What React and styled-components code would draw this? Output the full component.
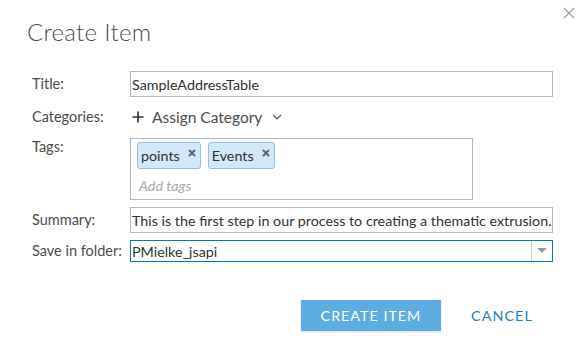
import React from "react";
import styled, { createGlobalStyle } from "styled-components";

const Global = createGlobalStyle`
  html, body { margin: 0; padding: 0; background: #fff; }
  body { font-family: "Lato", "Noto Sans", sans-serif; color: #323232; }
`;

const Dialog = styled.div`
  position: relative;
  width: 585px;
  height: 361px;
  box-sizing: border-box;
  padding: 17px 0 0 27px;
`;

const Close = styled.button`
  position: absolute;
  top: 6px;
  right: 9px;
  width: 14px;
  height: 14px;
  padding: 0;
  border: 0;
  background: none;
  cursor: pointer;
`;

const Heading = styled.h1`
  margin: 0;
  font-size: 24px;
  font-weight: 300;
  line-height: 30px;
  color: #4c4c4c;
  letter-spacing: 0.3px;
`;

const Form = styled.div`
  display: grid;
  grid-template-columns: 98px 423px;
  row-gap: 7px;
  margin: 24px 0 0 5px;
  align-items: start;
`;

const Label = styled.div`
  font-size: 14.5px;
  color: #4c4c4c;
  line-height: ${(p) => p.$lh || "26px"};
  padding-top: ${(p) => p.$pt || "0"};
  white-space: nowrap;
`;

const Input = styled.div`
  box-sizing: border-box;
  height: ${(p) => p.$h || "26px"};
  border: 1px solid ${(p) => (p.$focus ? "#0079c1" : "#b7b7b7")};
  display: flex;
  align-items: center;
  padding-left: 1px;
  font-size: 14.3px;
  color: #323232;
  white-space: nowrap;
  overflow: hidden;
`;

const Category = styled.div`
  display: flex;
  align-items: center;
  height: 25px;
  font-size: 15.5px;
  color: #4c4c4c;
  gap: 8px;
  padding-left: 2px;
`;

const TagBox = styled.div`
  box-sizing: border-box;
  width: 343px;
  height: 62px;
  border: 1px solid #b7b7b7;
  padding: 3px 6px;
  margin-top: 2px;
`;

const ChipRow = styled.div`
  display: flex;
  gap: 7px;
`;

const Chip = styled.span`
  display: inline-flex;
  align-items: center;
  box-sizing: border-box;
  height: 27px;
  padding: 0 4px 0 3px;
  gap: 8px;
  background: #d2e7f7;
  border: 1px solid #8ec2e8;
  border-radius: 3px;
  font-size: 14.3px;
  color: #323232;
`;

const ChipX = styled.svg`
  width: 8px;
  height: 8px;
  margin-top: -6px;
`;

const Placeholder = styled.div`
  font-size: 14.3px;
  font-style: italic;
  color: #a8a8a8;
  padding: 8px 0 0 2px;
`;

const SelectText = styled.span`
  flex: 1;
`;

const SelectArrow = styled.span`
  width: 20px;
  height: 100%;
  border-left: 1px solid #cfcfcf;
  display: flex;
  align-items: center;
  justify-content: center;
`;

const Actions = styled.div`
  display: flex;
  gap: 30px;
  margin: 38px 0 0 274px;
  align-items: center;
`;

const Primary = styled.button`
  width: 140px;
  height: 31px;
  border: 0;
  background: #5dade0;
  color: #fff;
  font-family: inherit;
  font-size: 14.3px;
  letter-spacing: 1px;
  box-shadow: 0 1px 2px rgba(0, 0, 0, 0.15);
`;

const Secondary = styled.button`
  border: 0;
  background: none;
  padding: 0;
  color: #1a7fc4;
  font-family: inherit;
  font-size: 14.3px;
  letter-spacing: 1.1px;
`;

const X = () => (
  <ChipX viewBox="0 0 8 8">
    <path d="M1 1 L7 7 M7 1 L1 7" stroke="#666" strokeWidth="2" />
  </ChipX>
);

export default function App() {
  return (
    <>
      <Global />
      <Dialog>
        <Close aria-label="close">
          <svg width="14" height="14" viewBox="0 0 14 14">
            <path d="M2 2 L12 12 M12 2 L2 12" stroke="#a0a0a0" strokeWidth="1.3" />
          </svg>
        </Close>
        <Heading>Create Item</Heading>
        <Form>
          <Label>Title:</Label>
          <Input>SampleAddressTable</Input>

          <Label $lh="25px">Categories:</Label>
          <Category>
            <svg width="12" height="12" viewBox="0 0 12 12">
              <path d="M6 0.5 V11.5 M0.5 6 H11.5" stroke="#323232" strokeWidth="1.6" />
            </svg>
            <span>Assign Category</span>
            <svg width="10" height="8" viewBox="0 0 10 8" style={{ marginLeft: 2 }}>
              <path d="M1 2 L5 6 L9 2" stroke="#555" strokeWidth="1.1" fill="none" />
            </svg>
          </Category>

          <Label $lh="18px" $pt="2px">Tags:</Label>
          <TagBox>
            <ChipRow>
              <Chip>points<X /></Chip>
              <Chip>Events<X /></Chip>
            </ChipRow>
            <Placeholder>Add tags</Placeholder>
          </TagBox>

          <Label>Summary:</Label>
          <Input>This is the first step in our process to creating a thematic extrusion.</Input>

          <Label $lh="22px">Save in folder:</Label>
          <Input $h="22px" $focus>
            <SelectText>PMielke_jsapi</SelectText>
            <SelectArrow>
              <svg width="10" height="6" viewBox="0 0 10 6">
                <path d="M0 0 H10 L5 5 Z" fill="#9a9a9a" />
              </svg>
            </SelectArrow>
          </Input>
        </Form>
        <Actions>
          <Primary>CREATE ITEM</Primary>
          <Secondary>CANCEL</Secondary>
        </Actions>
      </Dialog>
    </>
  );
}
